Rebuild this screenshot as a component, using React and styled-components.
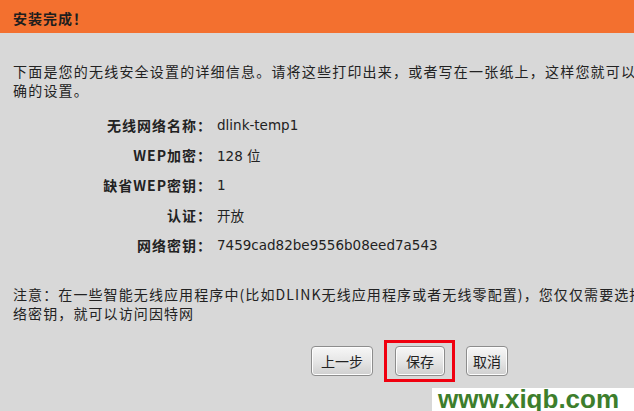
import React from 'react'
import styled, { createGlobalStyle } from 'styled-components'

const GlobalStyle = createGlobalStyle`
html, body {
  margin: 0;
  padding: 0;
  background: #d8d8d8;
  overflow: hidden;
}
body {
  font-family: "Noto Sans CJK SC", "DejaVu Sans", sans-serif;
  color: #222;
}
`

const rows = [
  { label: '无线网络名称：', value: 'dlink-temp1' },
  { label: 'WEP加密：', value: '128 位' },
  { label: '缺省WEP密钥：', value: '1' },
  { label: '认证：', value: '开放' },
  { label: '网络密钥：', value: '7459cad82be9556b08eed7a543' },
]

const App = () => {
  return (
    <Page>
      <GlobalStyle />
      <Header>
        <Title>安装完成！</Title>
      </Header>
      <Body>
        <Para>
          下面是您的无线安全设置的详细信息。请将这些打印出来，或者写在一张纸上，这样您就可以正
          <br />
          确的设置。
        </Para>
        <InfoGrid>
          {rows.map((r) => (
            <React.Fragment key={r.label}>
              <Label>{r.label}</Label>
              <Value>{r.value}</Value>
            </React.Fragment>
          ))}
        </InfoGrid>
        <Note>
          注意：在一些智能无线应用程序中(比如DLINK无线应用程序或者无线零配置)，您仅仅需要选择该网
          <br />
          络密钥，就可以访问因特网
        </Note>
        <Buttons>
          <Button $w={62}>上一步</Button>
          <Highlight>
            <Button $w={50}>保存</Button>
          </Highlight>
          <Button $w={42}>取消</Button>
        </Buttons>
      </Body>
      <Watermark>www.xiqb.com</Watermark>
    </Page>
  )
}

export default App

const Page = styled.div`
position: relative;
width: 816px;
height: 411px;
overflow: hidden;
background: #d8d8d8;
`
const Header = styled.div`
height: 33px;
background: #f3702f;
display: flex;
align-items: center;
padding: 0 13px;
`
const Title = styled.div`
font-size: 14px;
font-weight: bold;
letter-spacing: 1px;
color: #1e1e1e;
line-height: 1;
margin-top: 3px;
`
const Body = styled.div`
padding: 29px 13px 0;
display: flex;
flex-direction: column;
`
const Para = styled.div`
font-size: 14px;
letter-spacing: 1.2px;
line-height: 19px;
white-space: nowrap;
`
const InfoGrid = styled.div`
display: grid;
grid-template-columns: 199px auto;
column-gap: 5px;
grid-auto-rows: 30px;
align-items: center;
margin-top: 10px;
`
const Label = styled.div`
text-align: right;
font-size: 14px;
font-weight: bold;
letter-spacing: 1px;
white-space: nowrap;
`
const Value = styled.div`
font-family: "DejaVu Sans", "Noto Sans CJK SC", sans-serif;
font-size: 13.5px;
white-space: nowrap;
`
const Note = styled(Para)`
margin-top: 25px;
letter-spacing: 1.1px;
`
const Buttons = styled.div`
display: flex;
justify-content: center;
align-items: center;
gap: 11px;
margin-top: 17px;
padding-left: 3px;
`
const Highlight = styled.div`
border: 3px solid #f0000f;
padding: 3px 7px 3px 8px;
display: flex;
`
const Button = styled.div`
width: ${(p) => p.$w}px;
height: 30px;
box-sizing: border-box;
display: flex;
align-items: center;
justify-content: center;
font-size: 14px;
color: #222;
border: 1px solid #8d8d8d;
border-radius: 4px;
background: linear-gradient(#f7f7f7, #e6e6e6 50%, #cfcfcf);
box-shadow: inset 0 0 0 1px #fdfdfd;
`
const Watermark = styled.div`
position: absolute;
left: 432px;
top: 388px;
width: 202px;
height: 23px;
background: #fff;
color: #3d7e2c;
font-family: "Liberation Sans", Arial, sans-serif;
font-weight: bold;
font-size: 26px;
line-height: 23px;
padding-left: 6px;
box-sizing: border-box;
overflow: hidden;
`
